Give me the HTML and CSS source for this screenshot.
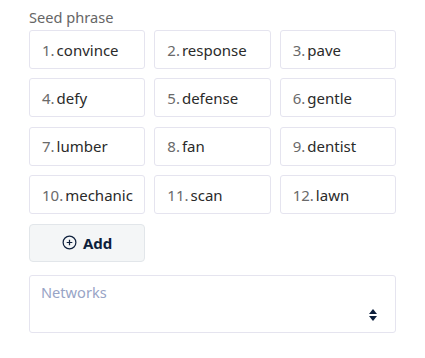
FILE: index.html
```html
<!DOCTYPE html>
<html lang="en">
<head>
  <meta charset="UTF-8" />
  <title>Seed phrase</title>
  <link rel="stylesheet" href="styles.css">
</head>
<body>

<div class="form">
  <label class="label">Seed phrase</label>
  <div class="words">
    <div class="word"><span class="num">1.</span>convince</div>
    <div class="word"><span class="num">2.</span>response</div>
    <div class="word"><span class="num">3.</span>pave</div>
    <div class="word"><span class="num">4.</span>defy</div>
    <div class="word"><span class="num">5.</span>defense</div>
    <div class="word"><span class="num">6.</span>gentle</div>
    <div class="word"><span class="num">7.</span>lumber</div>
    <div class="word"><span class="num">8.</span>fan</div>
    <div class="word"><span class="num">9.</span>dentist</div>
    <div class="word"><span class="num">10.</span>mechanic</div>
    <div class="word"><span class="num">11.</span>scan</div>
    <div class="word"><span class="num">12.</span>lawn</div>
    <button class="btn-add">
      <svg width="15" height="15" viewBox="0 0 16 16" fill="none" stroke="currentColor" stroke-width="1.3">
        <circle cx="8" cy="8" r="6.8" />
        <path d="M8 5v6M5 8h6" />
      </svg>
      Add
    </button>
  </div>

  <!-- select de redes -->
  <div class="select">
    <span class="placeholder">Networks</span>
    <svg class="arrows" width="10" height="14" viewBox="0 0 10 14">
      <path d="M5 1L9 6H1z" fill="#0d1f3c" />
      <path d="M5 13L9 8H1z" fill="#0d1f3c" />
    </svg>
  </div>
</div>

</body>
</html>
```

FILE: styles.css
```css
body { margin: 0; padding: 8px 29px; font-family: "Noto Sans", sans-serif; background: #fff; }
.form { width: 367px; }
.label { display: block; font-size: 14.6px; line-height: 19px; color: #666; margin-bottom: 3px; }
.words { display: grid; grid-template-columns: repeat(3, 1fr); column-gap: 9px; row-gap: 9.4px; }
.word { height: 39px; box-sizing: border-box; border: 1px solid #e5e4ef; border-radius: 3px; display: flex; align-items: center; padding-left: 12px; font-size: 15px; color: #2a2a2a; }
.num { color: #6a6a6a; margin-right: 2px; }
.btn-add { height: 38px; border: 1px solid #e2e6ea; border-radius: 4px; background: #f4f6f7; color: #0d1f3c; font-family: inherit; font-size: 15px; font-weight: bold; display: flex; align-items: center; justify-content: center; gap: 6px; cursor: pointer; }
.select { position: relative; margin-top: 13px; height: 58px; box-sizing: border-box; border: 1px solid #e5e4ef; border-radius: 3px; padding: 5px 11px; }
.placeholder { font-size: 14.6px; color: #98a4c6; }
.arrows { position: absolute; right: 17px; bottom: 10px; }
```
